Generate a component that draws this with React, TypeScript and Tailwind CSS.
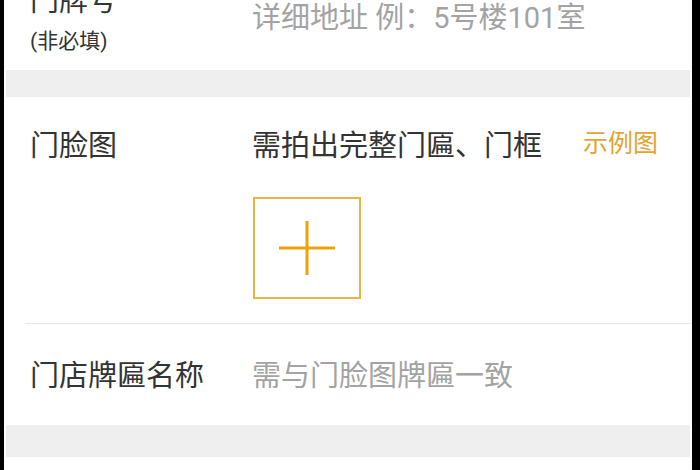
import React from 'react';

const font = { fontFamily: 'Roboto, "Noto Sans CJK SC", sans-serif' };

const App = () => {
  return (
    <div className="w-[700px] h-[470px] bg-black pl-[4px] pr-[8px] overflow-hidden" style={font}>
      <div className="h-full bg-white flex flex-col">
        {/* door number row, scrolled partly out of view */}
        <div className="h-[70px] flex shrink-0">
          <div className="w-[248px] pl-[26px] flex flex-col">
            <span className="mt-[-13px] text-[29px] leading-[28px] text-[#333]">门牌号</span>
            <span className="mt-[14px] text-[21px] leading-[24px] text-[#333]">(非必填)</span>
          </div>
          <span className="mt-[4px] text-[29px] leading-[28px] text-[#a3a3a3]">详细地址 例：5号楼101室</span>
        </div>

        <div className="h-[27px] mx-[2px] bg-[#efefef] shrink-0" />

        {/* storefront photo */}
        <div className="flex flex-col shrink-0 h-[226px]">
          <div className="flex pt-[35px]">
            <span className="w-[248px] pl-[26px] text-[29px] leading-[28px] text-[#333]">门脸图</span>
            <span className="text-[29px] leading-[28px] text-[#333]">需拍出完整门匾、门框</span>
            <span className="ml-auto mr-[34px] text-[25px] leading-[24px] text-[#e3a431]">示例图</span>
          </div>
          <div className="ml-[249px] mt-[37px] w-[108px] h-[102px] border-2 border-[#e9b449] flex items-center justify-center">
            <svg width="56" height="54" viewBox="0 0 56 54">
              <path d="M0 27H56M28 0V54" stroke="#f0a20a" strokeWidth="3" />
            </svg>
          </div>
        </div>

        <div className="h-[1px] ml-[21px] bg-[#e6e6e6] shrink-0" />

        {/* sign name */}
        <div className="h-[101px] flex pt-[38px] shrink-0">
          <span className="w-[248px] pl-[26px] text-[29px] leading-[28px] text-[#333]">门店牌匾名称</span>
          <span className="text-[29px] leading-[28px] text-[#a3a3a3]">需与门脸图牌匾一致</span>
        </div>

        <div className="h-[32px] mx-[2px] bg-[#efefef] shrink-0" />
      </div>
    </div>
  );
};

export default App;
